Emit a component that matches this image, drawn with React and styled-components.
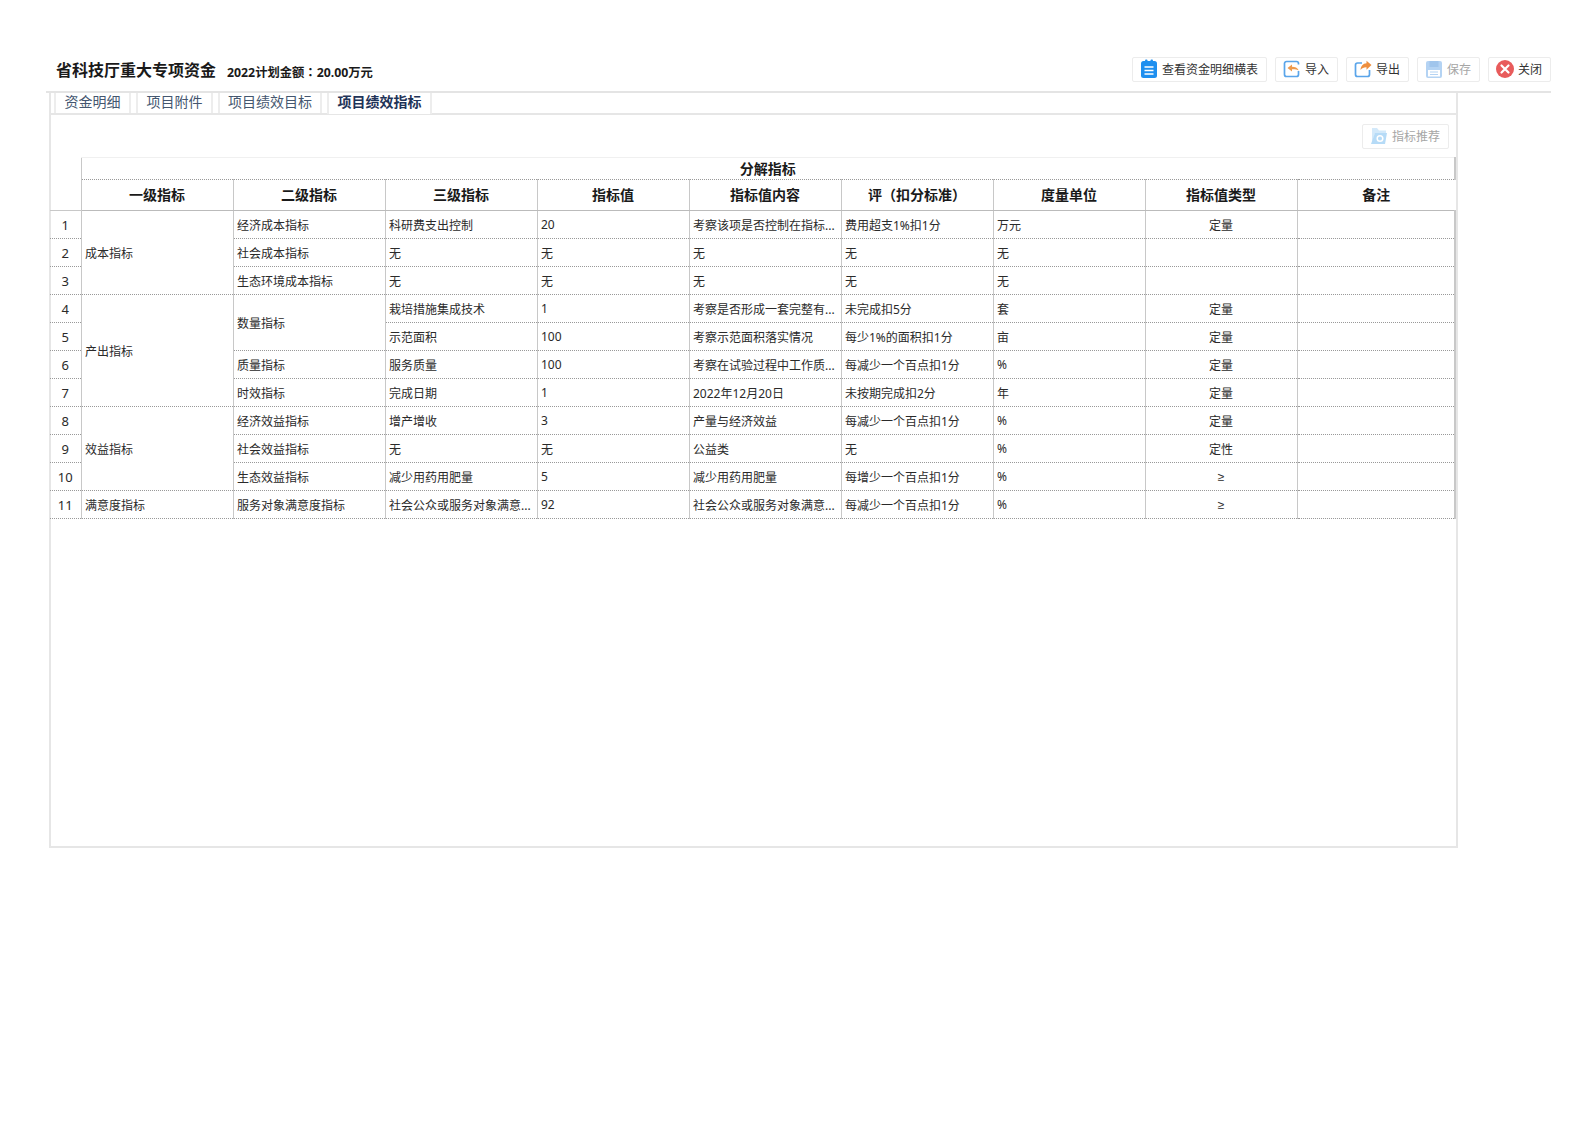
import React from 'react';
import styled, { createGlobalStyle } from 'styled-components';

const GlobalStyle = createGlobalStyle`
  html, body { margin: 0; padding: 0; background: #fff; }
  body { font-family: "Noto Sans", "Noto Sans CJK SC", sans-serif; color: #222; }
`;

const Page = styled.div`
  width: 1588px;
  height: 1123px;
  padding: 57px 37px 0 46px;
  box-sizing: border-box;
`;

const Header = styled.div`
  display: flex;
  justify-content: space-between;
  align-items: flex-start;
  height: 34px;
  padding-left: 10px;
  border-bottom: 2px solid #e4e4e4;
`;

const TitleWrap = styled.div`
  display: flex;
  align-items: center;
  gap: 11px;
  height: 26px;
`;

const Title = styled.h1`
  margin: 0;
  font-size: 16px;
  line-height: 26px;
  font-weight: 700;
  color: #1a1a1a;
`;

const Amount = styled.span`
  padding-top: 4px;
  font-size: 12.3px;
  font-weight: 700;
  color: #1a1a1a;
`;

// centred full-width punctuation, as in the reference
const Punct = styled.span`
  font-family: "Noto Sans CJK TC", sans-serif;
`;

const Actions = styled.div`
  display: flex;
  gap: 8px;
`;

const Button = styled.button`
  display: flex;
  align-items: center;
  gap: 4px;
  height: 25px;
  box-sizing: border-box;
  padding: 0 8px 1px 7px;
  background: #fff;
  border: 1px solid #ececec;
  border-radius: 2px;
  font-family: inherit;
  font-size: 12px;
  color: ${p => (p.$disabled ? '#a6a6a6' : '#333')};
  svg { opacity: ${p => (p.$disabled ? 0.45 : 1)}; flex: none; }
`;

const Panel = styled.div`
  width: 1409px;
  height: 755px;
  margin-left: 3px;
  box-sizing: border-box;
  border: solid #e6e6e6;
  border-width: 0 2px 2px 2px;
`;

const Tabs = styled.div`
  display: flex;
  gap: 5px;
  height: 20px;
  padding-left: 3px;
  border-bottom: 2px solid #e6e6e6;
`;

const Tab = styled.div`
  width: ${p => p.$width}px;
  height: ${p => (p.$active ? 21 : 20)}px;
  box-sizing: border-box;
  text-align: center;
  font-size: 14px;
  line-height: 18px;
  font-weight: ${p => (p.$active ? 700 : 400)};
  color: ${p => (p.$active ? '#1f3358' : '#44566f')};
  background: #fff;
  border: solid #ededed;
  border-width: 0 2px 0 2px;
`;

const Tools = styled.div`
  display: flex;
  justify-content: flex-end;
  height: 42px;
  padding: 9px 7px 0 0;
  box-sizing: border-box;
`;

const Grid = styled.table`
  width: 1405px;
  margin-left: -1px;
  table-layout: fixed;
  border-collapse: collapse;
  font-size: 12px;
  color: #2a2a2a;
`;

const GroupHead = styled.th`
  height: 22px;
  padding: 0;
  box-sizing: border-box;
  font-size: 14px;
  line-height: 18px;
  font-weight: 700;
  color: #1a1a1a;
  border-top: 1px solid #f0f0f0;
  border-bottom: 1px dotted #999;
  border-left: 1px solid #c8c8c8;
  border-right: 2px solid #c8c8c8;
`;

const Corner = styled.th`
  padding: 0;
  border-bottom: 1px solid #c8c8c8;
`;

const Head = styled.th`
  height: 31px;
  padding: 0 0 1px;
  box-sizing: border-box;
  font-size: 14px;
  line-height: 18px;
  font-weight: 700;
  color: #1a1a1a;
  border-bottom: 1px solid #bbb;
  border-left: 1px solid #c8c8c8;
`;

const Cell = styled.td`
  height: 27px;
  padding: 0 3.5px;
  white-space: nowrap;
  overflow: hidden;
  text-align: ${p => (p.$center ? 'center' : 'left')};
  font-size: ${p => (p.$num ? 13 : 12)}px;
  border-bottom: 1px dotted #999;
  border-left: ${p => (p.$num ? 'none' : '1px solid #c8c8c8')};
  &:last-child { border-right: 2px solid #c8c8c8; }
`;

const TypeCell = styled(Cell)`
  font-family: "Liberation Sans", "Noto Sans CJK SC", sans-serif;
`;

const ClipboardIcon = () => (
  <svg width="18" height="20" viewBox="0 0 18 20">
    <rect x="1" y="2" width="16" height="17" rx="2.5" fill="#1e8fef" />
    <rect x="5" y="0.5" width="2.5" height="4" rx="1" fill="#1e8fef" />
    <rect x="10.5" y="0.5" width="2.5" height="4" rx="1" fill="#1e8fef" />
    <path d="M4.5 8h9M4.5 11.5h9M4.5 15h9" stroke="#fff" strokeWidth="1.4" />
  </svg>
);

const ImportIcon = () => (
  <svg width="18" height="18" viewBox="0 0 18 18" fill="none">
    <path d="M15.500 4.500V3.500a2 2 0 0 0-2-2h-10a2 2 0 0 0-2 2v11a2 2 0 0 0 2 2h10a2 2 0 0 0 2-2V11" stroke="#5aa5ea" strokeWidth="1.700" />
    <path d="M4.500 8 9 4.500v2.200c3 0 5.500 1 6.800 3.800-1.800-1-4-1.300-6.800-1.200v2.200z" fill="#ee9a4d" />
  </svg>
);

const ExportIcon = () => (
  <svg width="18" height="18" viewBox="0 0 18 18" fill="none">
    <path d="M8 3H3.500a2 2 0 0 0-2 2v9.500a2 2 0 0 0 2 2h10a2 2 0 0 0 2-2V10" stroke="#5aa5ea" strokeWidth="1.700" />
    <path d="M17.500 5 12.500.8v2.500C9 3.500 6.800 6 6.500 10c1.500-2 3.500-2.800 6-2.700v2.400z" fill="#ee8f3f" />
  </svg>
);

const SaveIcon = () => (
  <svg width="18" height="19" viewBox="0 0 18 19">
    <rect x="1" y="1" width="16" height="17" rx="2" fill="#5b9fe6" />
    <rect x="4.500" y="1" width="9" height="6" fill="#2f7fd6" />
    <rect x="3" y="10" width="12" height="6.500" fill="#fff" />
    <path d="M5 12h8M5 14.500h8" stroke="#5b9fe6" strokeWidth="1" />
  </svg>
);

const CloseIcon = () => (
  <svg width="18" height="18" viewBox="0 0 18 18">
    <circle cx="9" cy="9" r="9" fill="#e85b5b" />
    <path d="M5.500 5.500l7 7M12.500 5.500l-7 7" stroke="#fff" strokeWidth="2.200" strokeLinecap="round" />
  </svg>
);

const FolderIcon = () => (
  <svg width="18" height="18" viewBox="0 0 18 18">
    <path d="M2 1h5l2 2.500h7v3H5L2 16z" fill="#9fd0f5" />
    <path d="M5 6h12l-2 11H1z" fill="#5fb1ee" />
    <circle cx="10" cy="11.500" r="2.800" fill="none" stroke="#fff" strokeWidth="1.500" />
  </svg>
);

const buttons = [
  { label: '查看资金明细横表', icon: <ClipboardIcon /> },
  { label: '导入', icon: <ImportIcon /> },
  { label: '导出', icon: <ExportIcon /> },
  { label: '保存', icon: <SaveIcon />, disabled: true },
  { label: '关闭', icon: <CloseIcon /> },
];

const tabs = [
  { label: '资金明细', width: 77 },
  { label: '项目附件', width: 77 },
  { label: '项目绩效目标', width: 104 },
  { label: '项目绩效指标', width: 105, active: true },
];

const columns = [
  '一级指标',
  '二级指标',
  '三级指标',
  '指标值',
  '指标值内容',
  <React.Fragment key="rule">评<Punct>（</Punct>扣分标准<Punct>）</Punct></React.Fragment>,
  '度量单位',
  '指标值类型',
  '备注',
];

// first: [text, rowSpan], second: [text, rowSpan], only on the row that starts the span
const rows = [
  { first: ['成本指标', 3], second: ['经济成本指标', 1], third: '科研费支出控制', value: '20', content: '考察该项是否控制在指标...', rule: '费用超支1%扣1分', unit: '万元', type: '定量' },
  { second: ['社会成本指标', 1], third: '无', value: '无', content: '无', rule: '无', unit: '无', type: '' },
  { second: ['生态环境成本指标', 1], third: '无', value: '无', content: '无', rule: '无', unit: '无', type: '' },
  { first: ['产出指标', 4], second: ['数量指标', 2], third: '栽培措施集成技术', value: '1', content: '考察是否形成一套完整有...', rule: '未完成扣5分', unit: '套', type: '定量' },
  { third: '示范面积', value: '100', content: '考察示范面积落实情况', rule: '每少1%的面积扣1分', unit: '亩', type: '定量' },
  { second: ['质量指标', 1], third: '服务质量', value: '100', content: '考察在试验过程中工作质...', rule: '每减少一个百点扣1分', unit: '%', type: '定量' },
  { second: ['时效指标', 1], third: '完成日期', value: '1', content: '2022年12月20日', rule: '未按期完成扣2分', unit: '年', type: '定量' },
  { first: ['效益指标', 3], second: ['经济效益指标', 1], third: '增产增收', value: '3', content: '产量与经济效益', rule: '每减少一个百点扣1分', unit: '%', type: '定量' },
  { second: ['社会效益指标', 1], third: '无', value: '无', content: '公益类', rule: '无', unit: '%', type: '定性' },
  { second: ['生态效益指标', 1], third: '减少用药用肥量', value: '5', content: '减少用药用肥量', rule: '每增少一个百点扣1分', unit: '%', type: '≥' },
  { first: ['满意度指标', 1], second: ['服务对象满意度指标', 1], third: '社会公众或服务对象满意...', value: '92', content: '社会公众或服务对象满意...', rule: '每减少一个百点扣1分', unit: '%', type: '≥' },
];

const App = () => {
  return (
    <Page>
      <GlobalStyle />
      <Header>
        <TitleWrap>
          <Title>省科技厅重大专项资金</Title>
          <Amount>2022计划金额<Punct>：</Punct>20.00万元</Amount>
        </TitleWrap>
        <Actions>
          {buttons.map(b => (
            <Button key={b.label} $disabled={b.disabled}>
              {b.icon}
              {b.label}
            </Button>
          ))}
        </Actions>
      </Header>
      <Panel>
        <Tabs>
          {tabs.map(t => (
            <Tab key={t.label} $width={t.width} $active={t.active}>{t.label}</Tab>
          ))}
        </Tabs>
        <Tools>
          <Button $disabled>
            <FolderIcon />
            指标推荐
          </Button>
        </Tools>
        <Grid>
          <colgroup>
            <col width="31" />
            <col width="152" />
            <col width="152" />
            <col width="152" />
            <col width="152" />
            <col width="152" />
            <col width="152" />
            <col width="152" />
            <col width="152" />
            <col width="158" />
          </colgroup>
          <thead>
            <tr>
              <Corner rowSpan={2} />
              <GroupHead colSpan={9}>分解指标</GroupHead>
            </tr>
            <tr>
              {columns.map((c, i) => <Head key={i}>{c}</Head>)}
            </tr>
          </thead>
          <tbody>
            {rows.map((r, i) => (
              <tr key={i}>
                <Cell $num $center>{i + 1}</Cell>
                {r.first && <Cell rowSpan={r.first[1]}>{r.first[0]}</Cell>}
                {r.second && <Cell rowSpan={r.second[1]}>{r.second[0]}</Cell>}
                <Cell>{r.third}</Cell>
                <Cell>{r.value}</Cell>
                <Cell>{r.content}</Cell>
                <Cell>{r.rule}</Cell>
                <Cell>{r.unit}</Cell>
                <TypeCell $center>{r.type}</TypeCell>
                <Cell />
              </tr>
            ))}
          </tbody>
        </Grid>
      </Panel>
    </Page>
  );
};

export default App;
